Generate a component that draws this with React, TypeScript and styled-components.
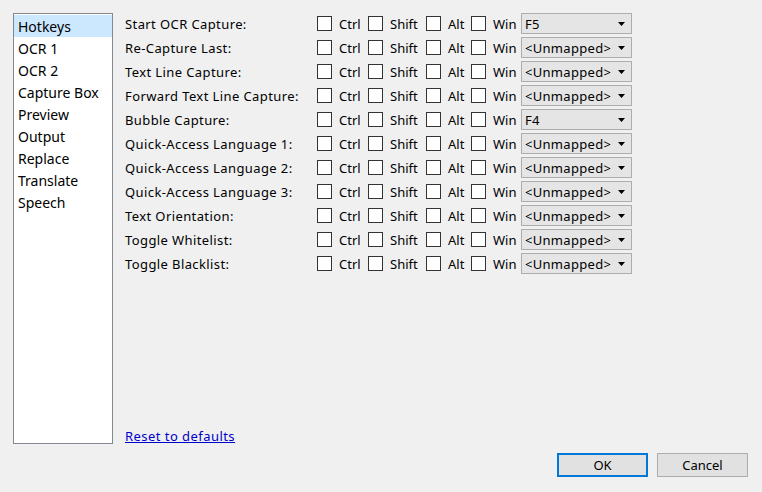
import React from "react";
import styled, { createGlobalStyle } from "styled-components";

const Global = createGlobalStyle`
  html, body { margin: 0; padding: 0; background: #f0f0f0; }
  body { width: 762px; height: 492px; overflow: hidden; font-family: "Noto Sans", "Liberation Sans", sans-serif; color: #000; }
`;

const Window = styled.div`
  width: 762px;
  height: 492px;
  box-sizing: border-box;
  background: #f0f0f0;
  padding: 13px 14px 15px 13px;
  display: flex;
  flex-direction: column;
`;

const Main = styled.div`
  display: flex;
  gap: 12px;
  height: 431px;
`;

const ListBox = styled.div`
  width: 100px;
  height: 431px;
  box-sizing: border-box;
  border: 1px solid #828790;
  background: #fff;
  padding: 1px 0 0 0;
  display: flex;
  flex-direction: column;
`;

const ListItem = styled.div<{ $selected?: boolean }>`
  height: 22px;
  line-height: 24px;
  padding-left: 4px;
  font-size: 14px;
  background: ${(p) => (p.$selected ? "#cce8ff" : "transparent")};
  white-space: nowrap;
`;

const Right = styled.div`
  flex: 1;
  display: flex;
  flex-direction: column;
  justify-content: space-between;
`;

const Grid = styled.div`
  display: grid;
  grid-template-columns: 192px 51px 58px 45px 50px 111px;
  grid-auto-rows: 24px;
  align-items: center;
  margin-top: -2px;
`;

const Label = styled.div`
  font-size: 13px;
  letter-spacing: 0.4px;
  line-height: 16px;
  padding-top: 2px;
  white-space: nowrap;
`;

const CheckPair = styled.label`
  display: flex;
  align-items: center;
  gap: 7px;
  font-size: 13px;
  white-space: nowrap;
`;

const ModText = styled.span`
  padding-top: 2px;
`;

const Box = styled.span`
  width: 15px;
  height: 15px;
  box-sizing: border-box;
  border: 1px solid #333;
  background: #fff;
  flex: none;
`;

const Select = styled.div`
  width: 111px;
  height: 21px;
  box-sizing: border-box;
  border: 1px solid #adadad;
  background: #e5e5e5;
  display: flex;
  align-items: center;
  justify-content: space-between;
  padding: 1px 6px 0 3px;
  font-size: 13px;
  letter-spacing: 0.3px;
  white-space: nowrap;
`;

const Arrow = styled.svg`
  width: 7px;
  height: 4px;
  flex: none;
`;

const Link = styled.a`
  color: #0000cc;
  text-decoration: underline;
  font-size: 13px;
  letter-spacing: 0.45px;
  margin-bottom: -1px;
  cursor: pointer;
`;

const Footer = styled.div`
  display: flex;
  justify-content: flex-end;
  gap: 9px;
  margin-top: 9px;
`;

const Button = styled.button<{ $default?: boolean }>`
  width: 91px;
  height: 24px;
  box-sizing: border-box;
  background: #e1e1e1;
  border: ${(p) => (p.$default ? "2px solid #0078d7" : "1px solid #adadad")};
  font-family: "Noto Sans", "Liberation Sans", sans-serif;
  font-size: 13px;
  color: #000;
  padding: 0;
`;

const pages = ["Hotkeys", "OCR 1", "OCR 2", "Capture Box", "Preview", "Output", "Replace", "Translate", "Speech"];

const rows: [string, string][] = [
  ["Start OCR Capture:", "F5"],
  ["Re-Capture Last:", "<Unmapped>"],
  ["Text Line Capture:", "<Unmapped>"],
  ["Forward Text Line Capture:", "<Unmapped>"],
  ["Bubble Capture:", "F4"],
  ["Quick-Access Language 1:", "<Unmapped>"],
  ["Quick-Access Language 2:", "<Unmapped>"],
  ["Quick-Access Language 3:", "<Unmapped>"],
  ["Text Orientation:", "<Unmapped>"],
  ["Toggle Whitelist:", "<Unmapped>"],
  ["Toggle Blacklist:", "<Unmapped>"],
];

const mods = ["Ctrl", "Shift", "Alt", "Win"];

export default function App() {
  return (
    <>
      <Global />
      <Window>
        <Main>
          <ListBox>
            {pages.map((p, i) => (
              <ListItem key={p} $selected={i === 0}>{p}</ListItem>
            ))}
          </ListBox>
          <Right>
            <Grid>
              {rows.map(([label, key]) => (
                <React.Fragment key={label}>
                  <Label>{label}</Label>
                  {mods.map((m) => (
                    <CheckPair key={m}>
                      <Box />
                      <ModText>{m}</ModText>
                    </CheckPair>
                  ))}
                  <Select>
                    <span>{key}</span>
                    <Arrow viewBox="0 0 7 4">
                      <path d="M0 0 H7 L3.5 4 Z" fill="#000" />
                    </Arrow>
                  </Select>
                </React.Fragment>
              ))}
            </Grid>
            <Link>Reset to defaults</Link>
          </Right>
        </Main>
        <Footer>
          <Button $default>OK</Button>
          <Button>Cancel</Button>
        </Footer>
      </Window>
    </>
  );
}
